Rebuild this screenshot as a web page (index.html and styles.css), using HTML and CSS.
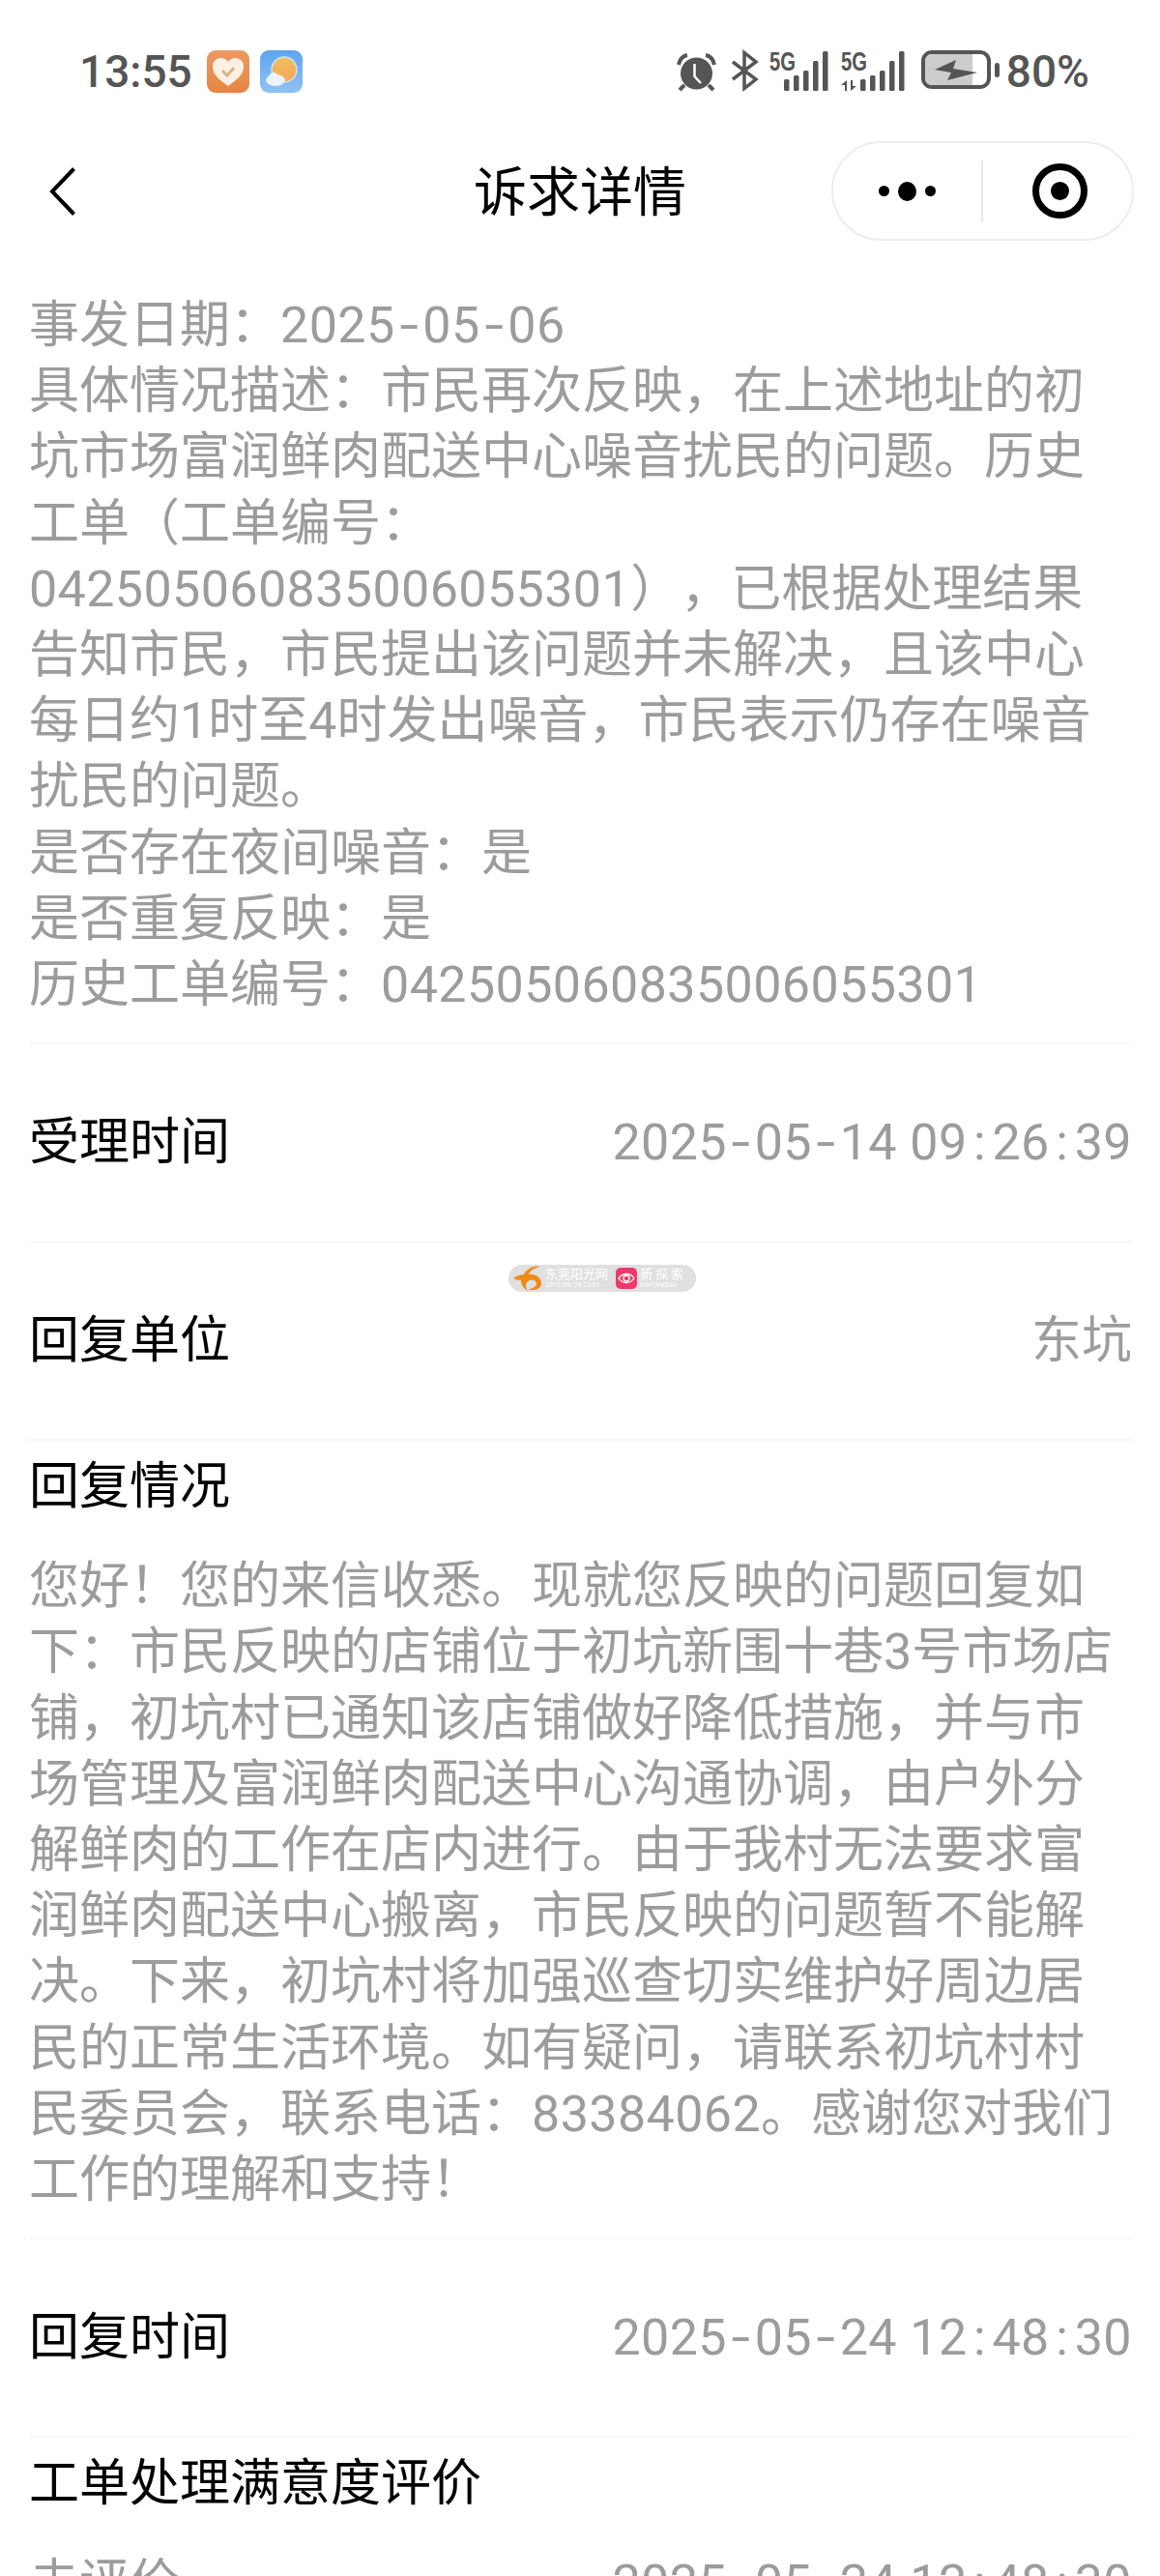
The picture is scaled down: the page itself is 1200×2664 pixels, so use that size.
FILE: index.html
```html
<!DOCTYPE html>
<html lang="zh-CN">
<head>
  <meta charset="UTF-8">
  <meta name="viewport" content="width=device-width, initial-scale=1.0">
  <link rel="stylesheet" href="styles.css">
  <title>诉求详情</title>
</head>
<body>

  <div class="phone">
    <div class="status-bar">
      <div class="status-left">
        <span class="clock">13:55</span>
        <svg class="app-icon" viewBox="0 0 44 44">
          <defs>
            <linearGradient id="heartBg" x1="0" y1="0" x2="0" y2="1"><stop offset="0" stop-color="#e99a62"/><stop offset="1" stop-color="#e78543"/></linearGradient>
            <linearGradient id="skyBg" x1="0" y1="0" x2="0" y2="1"><stop offset="0" stop-color="#5fa5ee"/><stop offset="1" stop-color="#8fc2f5"/></linearGradient>
            <linearGradient id="sunBg" x1="0" y1="0" x2="0" y2="1"><stop offset="0" stop-color="#f0c060"/><stop offset="1" stop-color="#f4a658"/></linearGradient>
          </defs>
          <rect width="44" height="44" rx="9" fill="url(#heartBg)"/>
          <path d="M22 37C15 32 6 26 6 17C6 11 10 8 15 8C18 8 21 10 22 12C23 10 26 8 29 8C34 8 38 11 38 17C38 26 29 32 22 37Z" fill="#fbf0e4"/>
          <path d="M16 21L21 26L28 18" fill="none" stroke="#d8b48c" stroke-width="3"/>
        </svg>
        <svg class="app-icon" viewBox="0 0 44 44">
          <rect width="44" height="44" rx="9" fill="url(#skyBg)"/>
          <circle cx="25" cy="20" r="13" fill="url(#sunBg)" stroke="#cfe0ee" stroke-width="1.5"/>
          <ellipse cx="16" cy="31" rx="10" ry="6" fill="#eaf4fc"/>
          <circle cx="14" cy="28" r="5" fill="#eaf4fc"/>
        </svg>
      </div>
      <div class="status-right">
        <svg class="ic-alarm" viewBox="0 0 41 40">
          <circle cx="20.500" cy="21" r="16.500" fill="#555"/>
          <path d="M2 12C3 7 6 3 11 2M39 12C38 7 35 3 30 2" stroke="#555" stroke-width="4" fill="none"/>
          <path d="M8 33L3 38M33 33L38 38" stroke="#555" stroke-width="4" fill="none"/>
          <path d="M18.500 11V24L25 31" stroke="#fff" stroke-width="2.500" fill="none"/>
        </svg>
        <svg class="ic-bt" viewBox="0 0 28 40">
          <path d="M2 11L26 29L14 38.500V1.500L26 11L2 29" stroke="#555" stroke-width="3.500" fill="none"/>
        </svg>
        <svg class="ic-signal" viewBox="0 0 61 41">
          <text class="net" x="0" y="20" textLength="27" lengthAdjust="spacingAndGlyphs">5G</text>
          <rect x="15" y="29" width="5.500" height="12" rx="1.500"/>
          <rect x="25" y="25" width="5.500" height="16" rx="1.500"/>
          <rect x="35" y="20" width="5.500" height="21" rx="1.500"/>
          <rect x="45" y="10" width="5.500" height="31" rx="1.500"/>
          <rect x="55" y="0" width="5.500" height="41" rx="1.500"/>
        </svg>
        <svg class="ic-signal wide" viewBox="0 0 66 41">
          <text class="net" x="0" y="20" textLength="27" lengthAdjust="spacingAndGlyphs">5G</text>
          <path d="M6 30V41H4V35L0 35ZM10 30H12V36L16 36L10 41Z"/>
          <rect x="20" y="29" width="5.500" height="12" rx="1.500"/>
          <rect x="30" y="25" width="5.500" height="16" rx="1.500"/>
          <rect x="40" y="20" width="5.500" height="21" rx="1.500"/>
          <rect x="50" y="10" width="5.500" height="31" rx="1.500"/>
          <rect x="60" y="0" width="5.500" height="41" rx="1.500"/>
        </svg>
        <svg class="ic-batt" viewBox="0 0 81 40">
          <rect x="2" y="2" width="68" height="36" rx="9" fill="#fff" stroke="#555" stroke-width="4"/>
          <path d="M4 11A7 7 0 0 1 11 4H53V36H11A7 7 0 0 1 4 29Z" fill="#ccc"/>
          <path d="M14 20L36 10L33 19L58 23L27 31L31 23Z" fill="#555"/>
          <rect x="76" y="13" width="5" height="15" rx="2.500" fill="#555"/>
        </svg>
        <span class="percent">80%</span>
      </div>
    </div>

    <div class="nav-bar">
      <svg class="back" viewBox="0 0 27 50"><path d="M25.500 1.500L3 25L25.500 48.500" fill="none" stroke="#000" stroke-width="4"/></svg>
      <div class="nav-title">诉求详情</div>
      <div class="capsule">
        <div class="more"><i></i><b></b><i></i></div>
        <div class="capsule-line"></div>
        <svg class="target" viewBox="0 0 57 57"><circle cx="28.500" cy="28.500" r="25" fill="none" stroke="#000" stroke-width="7"/><circle cx="28.500" cy="28.500" r="9.500" fill="#000"/></svg>
      </div>
    </div>

    <div class="content">
      <p class="para first">事发日期&#xFF1A;<span class="num">2025<span class="hy">-</span>05<span class="hy">-</span>06</span><br>具体情况描述&#xFF1A;市民再次反映&#xFF0C;在上述地址的初<br>坑市场富润鲜肉配送中心噪音扰民的问题。历史<br>工单&#xFF08;工单编号&#xFF1A;<br><span class="num">042505060835006055301</span>&#xFF09;&#xFF0C;已根据处理结果<br>告知市民&#xFF0C;市民提出该问题并未解决&#xFF0C;且该中心<br>每日约1时至4时发出噪音&#xFF0C;市民表示仍存在噪音<br>扰民的问题。<br>是否存在夜间噪音&#xFF1A;是<br>是否重复反映&#xFF1A;是<br>历史工单编号&#xFF1A;<span class="num">042505060835006055301</span></p>

      <div class="row">
        <span class="label">受理时间</span>
        <span class="value num">2025<span class="hy">-</span>05<span class="hy">-</span>14 09<span class="co">:</span>26<span class="co">:</span>39</span>
      </div>

      <div class="row">
        <span class="label">回复单位</span>
        <span class="value">东坑</span>
        <div class="watermark">
          <svg class="wm-logo" viewBox="0 0 30 28"><path d="M0 14C4 11 8 10 11 10C14 4 21 0 28 2C22 3 17 6 16 10C22 9 29 13 29 19C29 25 21 28 15 25C19 25 24 23 24 19C23 15 17 14 14 18C12 21 13 24 15 27C10 24 8 20 8 16C5 16 2 15 0 14Z" fill="#ef8b14"/></svg>
          <div class="wm-text">
            <span class="wm-big">东莞阳光网</span>
            <span class="wm-small">2010/08/24 23:01</span>
          </div>
          <svg class="wm-eye" viewBox="0 0 22 22">
            <rect width="22" height="22" rx="5" fill="#ee3a6b"/>
            <path d="M3 11C7 5 15 5 19 11C15 17 7 17 3 11Z" fill="none" stroke="#fff" stroke-width="1.300"/>
            <circle cx="11" cy="11" r="3" fill="none" stroke="#fff" stroke-width="1.300"/>
          </svg>
          <div class="wm-text">
            <span class="wm-big wm-wide">新探索</span>
            <span class="wm-small">XINTANSUO</span>
          </div>
        </div>
      </div>

      <div class="block">
        <div class="label">回复情况</div>
        <p class="para">您好&#xFF01;您的来信收悉。现就您反映的问题回复如<br>下&#xFF1A;市民反映的店铺位于初坑新围十巷3号市场店<br>铺&#xFF0C;初坑村已通知该店铺做好降低措施&#xFF0C;并与市<br>场管理及富润鲜肉配送中心沟通协调&#xFF0C;由户外分<br>解鲜肉的工作在店内进行。由于我村无法要求富<br>润鲜肉配送中心搬离&#xFF0C;市民反映的问题暂不能解<br>决。下来&#xFF0C;初坑村将加强巡查切实维护好周边居<br>民的正常生活环境。如有疑问&#xFF0C;请联系初坑村村<br>民委员会&#xFF0C;联系电话&#xFF1A;<span class="num">83384062</span>。感谢您对我们<br>工作的理解和支持&#xFF01;</p>
      </div>

      <div class="row">
        <span class="label">回复时间</span>
        <span class="value num">2025<span class="hy">-</span>05<span class="hy">-</span>24 12<span class="co">:</span>48<span class="co">:</span>30</span>
      </div>

      <div class="block">
        <div class="label">工单处理满意度评价</div>
        <div class="eval">
          <span class="value">未评价</span>
          <span class="value num">2025<span class="hy">-</span>05<span class="hy">-</span>24 12<span class="co">:</span>48<span class="co">:</span>30</span>
        </div>
      </div>
    </div>
  </div>

</body>
</html>
```

FILE: styles.css
```css
body {
  margin: 0;
  background: #fff;
  font-family: Roboto, "Noto Sans CJK SC", sans-serif;
  text-spacing-trim: space-all;
}

.phone {
  width: 1200px;
  height: 2664px;
  overflow: hidden;
}

/* status bar */
.status-bar {
  height: 146px;
  padding: 52px 73px 0 82px;
  box-sizing: border-box;
  display: flex;
  justify-content: space-between;
  align-items: flex-start;
}

.status-left {
  display: flex;
  align-items: center;
  gap: 11px;
}

.clock {
  font-size: 46px;
  font-weight: 500;
  color: #555;
  line-height: 44px;
  margin-right: 4px;
}

.app-icon {
  width: 44px;
  height: 44px;
}

.status-right {
  display: flex;
  align-items: flex-start;
}

.status-right svg {
  display: block;
  flex: none;
  overflow: visible;
}

.ic-alarm {
  width: 41px;
  height: 40px;
  margin: 3px 15px 0 0;
}

.ic-bt {
  width: 28px;
  height: 40px;
  margin: 1px 12px 0 0;
}

.ic-signal {
  width: 61px;
  height: 41px;
  margin: 1px 13px 0 0;
  fill: #555;
}

.ic-signal.wide {
  width: 66px;
  margin-right: 17px;
}

.net {
  font-family: "Liberation Sans", sans-serif;
  font-size: 27px;
  font-weight: 700;
}

.ic-batt {
  width: 81px;
  height: 40px;
  margin-right: 7px;
}

.percent {
  font-size: 46px;
  font-weight: 500;
  color: #555;
  line-height: 44px;
}

/* nav */
.nav-bar {
  position: relative;
  height: 103px;
  display: flex;
  align-items: center;
  justify-content: center;
}

.back {
  position: absolute;
  left: 51px;
  top: 27px;
  width: 27px;
  height: 50px;
}

.nav-title {
  font-size: 55px;
  line-height: 104px;
  padding-top: 3px;
  color: #000;
}

.capsule {
  position: absolute;
  right: 27px;
  top: 0;
  width: 313px;
  height: 103px;
  box-sizing: border-box;
  border: 2px solid #ededed;
  border-radius: 52px;
  display: flex;
  align-items: center;
}

.more {
  width: 153px;
  display: flex;
  align-items: center;
  justify-content: center;
  gap: 9px;
}

.more i {
  width: 11px;
  height: 11px;
  border-radius: 50%;
  background: #000;
}

.more b {
  width: 19px;
  height: 20px;
  border-radius: 50%;
  background: #000;
}

.capsule-line {
  width: 2px;
  height: 64px;
  background: #e8e8e8;
}

.target {
  width: 57px;
  height: 57px;
  margin-left: 51px;
}

/* content */
.content {
  padding: 54px 29px 0 30px;
}

.para {
  margin: 0;
  font-size: 52px;
  line-height: 68.2px;
  color: #9c9c9c;
  white-space: nowrap;
}

.para.first {
  padding-bottom: 25px;
}

.num {
  letter-spacing: 0.4px;
}

.hy {
  display: inline-block;
  margin: 0 7px;
  transform: scaleX(1.35);
}

.co {
  margin: 0 6.5px;
}

.row {
  position: relative;
  height: 205px;
  border-top: 2px solid #f7f7f7;
  display: flex;
  align-items: center;
  justify-content: space-between;
  box-sizing: border-box;
}

.label {
  font-size: 52px;
  line-height: 68px;
  color: #000;
}

.value {
  font-size: 52px;
  line-height: 68px;
  color: #9c9c9c;
}

.block {
  border-top: 2px solid #f7f7f7;
  padding: 14px 0 25px;
}

.block .label {
  margin-bottom: 35px;
}

.eval {
  display: flex;
  justify-content: space-between;
}

/* image watermark in the middle of the page */
.watermark {
  position: absolute;
  left: 496px;
  top: 23px;
  width: 194px;
  height: 28px;
  box-sizing: border-box;
  padding-left: 5px;
  border-radius: 14px;
  background: #e0e0e0;
  display: flex;
  align-items: center;
}

.wm-logo {
  width: 30px;
  height: 28px;
  flex: none;
}

.wm-text {
  display: flex;
  flex-direction: column;
  margin-left: 3px;
  color: #fff;
  white-space: nowrap;
}

.wm-big {
  font-size: 13px;
  line-height: 14px;
}

.wm-wide {
  letter-spacing: 3px;
}

.wm-small {
  font-size: 7px;
  line-height: 8px;
}

.wm-eye {
  flex: none;
  width: 22px;
  height: 22px;
  margin-left: 8px;
}
```
